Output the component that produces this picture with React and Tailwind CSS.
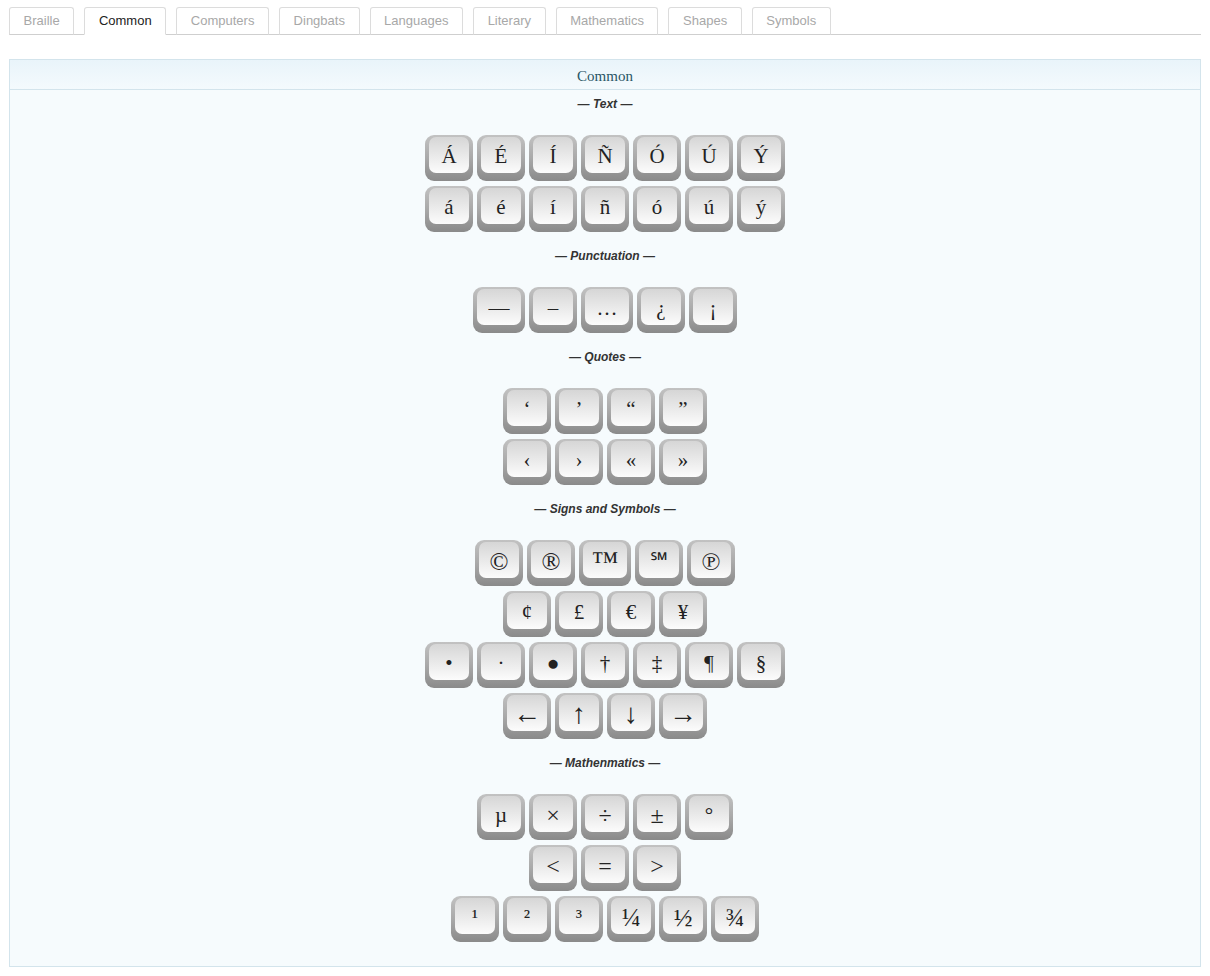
import React from "react";

const tabs = ["Braille", "Common", "Computers", "Dingbats", "Languages", "Literary", "Mathematics", "Shapes", "Symbols"];

const sections = [
  {
    title: "Text",
    rows: [
      ["Á", "É", "Í", "Ñ", "Ó", "Ú", "Ý"],
      ["á", "é", "í", "ñ", "ó", "ú", "ý"],
    ],
  },
  { title: "Punctuation", rows: [["—", "–", "…", "¿", "¡"]] },
  {
    title: "Quotes",
    rows: [
      ["‘", "’", "“", "”"],
      ["‹", "›", "«", "»"],
    ],
  },
  {
    title: "Signs and Symbols",
    rows: [
      ["©", "®", "™", "℠", "℗"],
      ["¢", "£", "€", "¥"],
      ["•", "·", "●", "†", "‡", "¶", "§"],
      ["←", "↑", "↓", "→"],
    ],
  },
  {
    title: "Mathenmatics",
    rows: [
      ["µ", "×", "÷", "±", "°"],
      ["<", "=", ">"],
      ["¹", "²", "³", "¼", "½", "¾"],
    ],
  },
];

const wide = ["—", "…", "™"];

// glyphs that come out small in the serif face get a bigger size
const sizeOf = (ch) => {
  if ("←↑↓→".includes(ch)) return "text-[28px]";
  if ("©®℗".includes(ch)) return "text-[25px]";
  if (ch === "™") return "text-[27px]";
  if (ch === "℠") return "text-[22px]";
  if ("¼½¾".includes(ch)) return "text-[25px]";
  if ("<=>×÷±".includes(ch)) return "text-[24px]";
  return "text-[21px]";
};

function Key({ ch }) {
  return (
    <button
      className={
        "h-[46px] rounded-[9px] bg-gradient-to-b from-[#c2c2c2] via-[#a9a9a9] to-[#8a8a8a] pt-[2px] px-[4px] pb-[8px] " +
        (wide.includes(ch) ? "w-[52px]" : "w-[48px]")
      }
    >
      <span
        className={
          "flex h-full w-full items-center justify-center rounded-[7px] bg-gradient-to-b from-[#d6d6d6] to-[#fcfcfc] pt-[2px] leading-none text-[#222] [font-family:'Liberation_Serif','DejaVu_Serif',serif] " +
          sizeOf(ch)
        }
      >
        {ch}
      </span>
    </button>
  );
}

export default function App() {
  return (
    <div className="min-h-[976px] bg-white px-[9px] pt-[7px] [font-family:'Liberation_Sans',Arial,sans-serif]">
      <div className="flex gap-[10px] border-b border-[#cfcfcf]">
        {tabs.map((t) => (
          <div
            key={t}
            className={
              "-mb-px h-[28px] rounded-t-[3px] border border-[#dcdcdc] px-[13.6px] text-[13px] leading-[26px] " +
              (t === "Common" ? "border-b-white bg-white text-[#222]" : "border-b-[#cfcfcf] bg-white text-[#a8a8a8]")
            }
          >
            {t}
          </div>
        ))}
      </div>

      <div className="mt-[24px] border border-[#d3e4ec] bg-[#f6fbfd]">
        <div className="h-[30px] border-b border-[#d3e4ec] bg-gradient-to-b from-[#e9f4fa] to-[#f4fafd] pt-px text-center text-[15px] leading-[30px] text-[#2a5666] [font-family:'Liberation_Serif',Georgia,serif]">
          Common
        </div>
        <div className="pt-[7px] pb-[24px]">
          {sections.map((s, i) => (
            <section key={s.title} className={i > 0 ? "mt-[17px]" : ""}>
              <div className="mb-[23px] h-[15px] text-center text-[12px] font-bold italic leading-[15px] text-[#333]">
                — {s.title} —
              </div>
              <div className="flex flex-col items-center gap-[5px]">
                {s.rows.map((row, j) => (
                  <div key={j} className="flex gap-[4px]">
                    {row.map((ch) => (
                      <Key key={ch} ch={ch} />
                    ))}
                  </div>
                ))}
              </div>
            </section>
          ))}
        </div>
      </div>
    </div>
  );
}
